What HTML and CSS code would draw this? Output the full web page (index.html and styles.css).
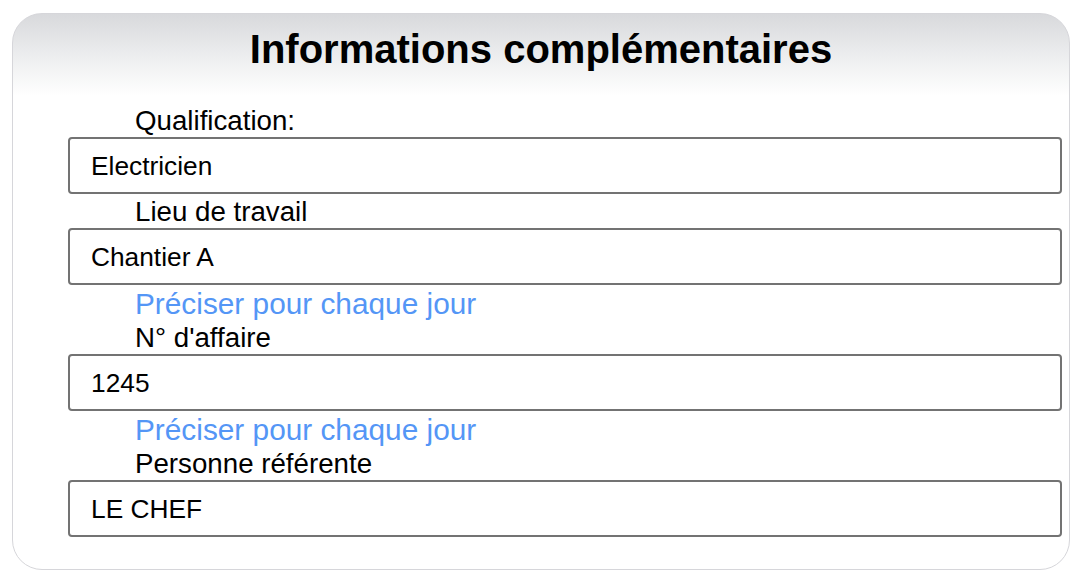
FILE: index.html
```html
<!DOCTYPE html>
<html lang="fr">
<head>
<meta charset="utf-8">
<title>Informations complémentaires</title>
<link rel="stylesheet" href="styles.css">
</head>
<body>
<section class="panel">
  <h1 class="panel-title">Informations complémentaires</h1>
  <form class="form">
    <label class="label" for="qualif">Qualification:</label>
    <input class="field" id="qualif" type="text" value="Electricien">

    <label class="label" for="lieu">Lieu de travail</label>
    <input class="field" id="lieu" type="text" value="Chantier A">
    <a class="link" href="#">Préciser pour chaque jour</a>

    <label class="label" for="affaire">N° d'affaire</label>
    <input class="field" id="affaire" type="text" value="1245">
    <a class="link" href="#">Préciser pour chaque jour</a>

    <label class="label" for="ref">Personne référente</label>
    <input class="field" id="ref" type="text" value="LE CHEF">
  </form>
</section>
</body>
</html>
```

FILE: styles.css
```css
* {
  box-sizing: border-box;
}

html, body {
  margin: 0;
  background: #ffffff;
}

body {
  padding: 13px 16px 12px 12px;
  font-family: "Liberation Sans", Arial, Helvetica, sans-serif;
  color: #000;
}

.panel {
  height: 557px;
  border: 1.5px solid #d6d6da;
  border-radius: 30px;
  background: linear-gradient(to bottom, #d8d9dc 0px, #eeeff0 45px, #ffffff 82px);
  padding: 12px 7px 30px 55px;
}

.panel-title {
  margin: 0 0 31px -55px;
  text-align: center;
  font-size: 40px;
  line-height: 46px;
  font-weight: 700;
  padding-left: 7px;
}

.form {
  display: flex;
  flex-direction: column;
  align-items: stretch;
}

.label {
  display: block;
  padding: 2px 0 0 67px;
  font-size: 27.7px;
  line-height: 32px;
}

.link {
  display: block;
  padding: 2px 0 0 67px;
  font-size: 29.8px;
  line-height: 33px;
  color: #5496f6;
  text-decoration: none;
}

.field {
  display: block;
  width: 100%;
  height: 57px;
  margin: 0;
  border: 2px solid #737373;
  border-radius: 4px;
  padding: 1px 0 0 21px;
  font-family: "Liberation Sans", Arial, Helvetica, sans-serif;
  font-size: 26.3px;
  color: #000;
  background: #fff;
  outline: none;
}
```
